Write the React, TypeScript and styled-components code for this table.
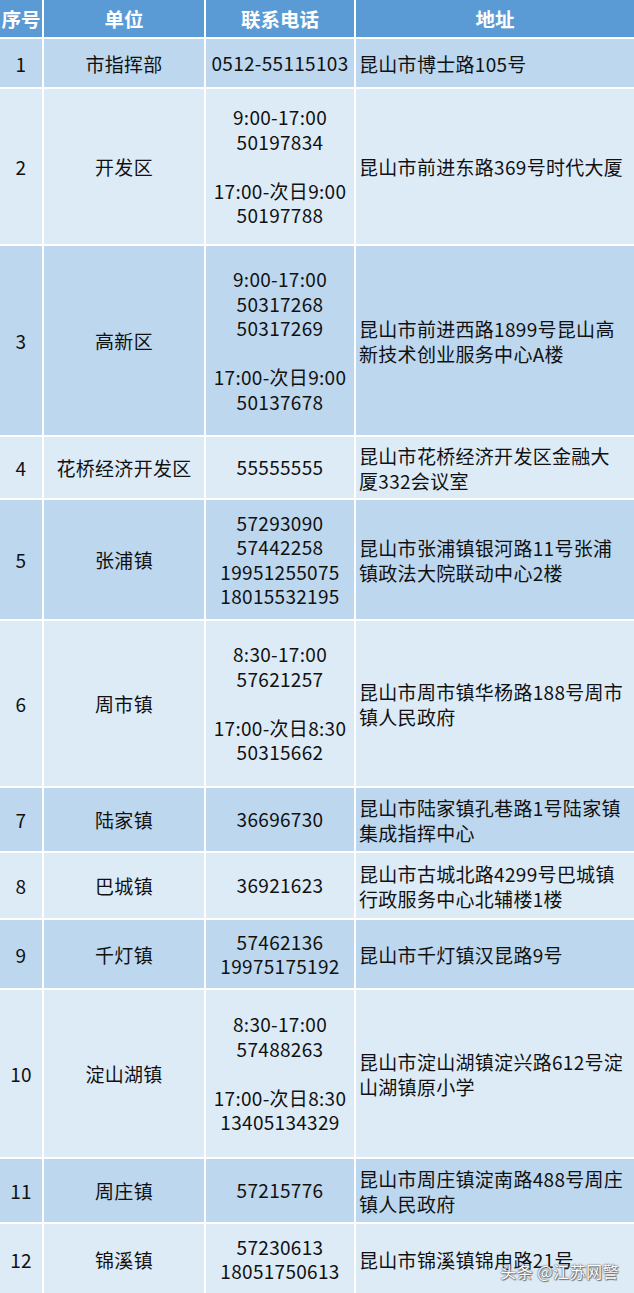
import * as React from 'react';
import styled, { createGlobalStyle } from 'styled-components';

const GlobalStyle = createGlobalStyle`
    html, body {
        margin: 0;
        padding: 0;
        background: #ffffff;
    }
    body {
        font-family: "Noto Sans CJK SC", "Liberation Sans", sans-serif;
        color: #111111;
    }
`;

const Page = styled.div`
    position: relative;
    width: 634px;
    height: 1293px;
    overflow: hidden;
    background: #ffffff;
`;

const Table = styled.div`
    display: flex;
    flex-direction: column;
    gap: 2px;
`;

const Row = styled.div<{ $height: number }>`
    display: grid;
    grid-template-columns: 42px 160px 148px 1fr;
    gap: 2px;
    height: ${p => p.$height}px;
`;

const HeadCell = styled.div`
    background: #5b9bd5;
    color: #ffffff;
    font-weight: 700;
    font-size: 19.5px;
    display: flex;
    align-items: center;
    justify-content: center;
    white-space: nowrap;
    overflow: hidden;
`;

const Cell = styled.div<{ $dark: boolean; $align?: 'left' | 'center' }>`
    background: ${p => (p.$dark ? '#bdd7ee' : '#ddebf7')};
    display: flex;
    flex-direction: column;
    justify-content: center;
    align-items: ${p => (p.$align === 'left' ? 'flex-start' : 'center')};
    padding: ${p => (p.$align === 'left' ? '0 0 0 3px' : '0')};
    font-size: 19px;
    letter-spacing: 0.3px;
    white-space: nowrap;
    overflow: hidden;
`;

const PhoneLine = styled.div`
    line-height: 24.5px;
    height: 24.5px;
`;

const AddrLine = styled.div`
    line-height: 25px;
`;

const Watermark = styled.div`
    position: absolute;
    right: 15px;
    bottom: 10px;
    font-size: 16px;
    color: #ffffff;
    letter-spacing: 0.5px;
    text-shadow: 0 0 1px #555, 0 0 2px #666, 1px 1px 1px #777;
`;

type Entry = {
    no: string;
    unit: string;
    phones: string[];
    address: string[];
    height: number;
};

const rows: Entry[] = [
    { no: '1', unit: '市指挥部', phones: ['0512-55115103'], address: ['昆山市博士路105号'], height: 48 },
    {
        no: '2', unit: '开发区',
        phones: ['9:00-17:00', '50197834', '', '17:00-次日9:00', '50197788'],
        address: ['昆山市前进东路369号时代大厦'], height: 155,
    },
    {
        no: '3', unit: '高新区',
        phones: ['9:00-17:00', '50317268', '50317269', '', '17:00-次日9:00', '50137678'],
        address: ['昆山市前进西路1899号昆山高', '新技术创业服务中心A楼'], height: 189,
    },
    { no: '4', unit: '花桥经济开发区', phones: ['55555555'], address: ['昆山市花桥经济开发区金融大', '厦332会议室'], height: 61 },
    {
        no: '5', unit: '张浦镇',
        phones: ['57293090', '57442258', '19951255075', '18015532195'],
        address: ['昆山市张浦镇银河路11号张浦', '镇政法大院联动中心2楼'], height: 119,
    },
    {
        no: '6', unit: '周市镇',
        phones: ['8:30-17:00', '57621257', '', '17:00-次日8:30', '50315662'],
        address: ['昆山市周市镇华杨路188号周市', '镇人民政府'], height: 165,
    },
    { no: '7', unit: '陆家镇', phones: ['36696730'], address: ['昆山市陆家镇孔巷路1号陆家镇', '集成指挥中心'], height: 63 },
    { no: '8', unit: '巴城镇', phones: ['36921623'], address: ['昆山市古城北路4299号巴城镇', '行政服务中心北辅楼1楼'], height: 65 },
    { no: '9', unit: '千灯镇', phones: ['57462136', '19975175192'], address: ['昆山市千灯镇汉昆路9号'], height: 68 },
    {
        no: '10', unit: '淀山湖镇',
        phones: ['8:30-17:00', '57488263', '', '17:00-次日8:30', '13405134329'],
        address: ['昆山市淀山湖镇淀兴路612号淀', '山湖镇原小学'], height: 167,
    },
    { no: '11', unit: '周庄镇', phones: ['57215776'], address: ['昆山市周庄镇淀南路488号周庄', '镇人民政府'], height: 63 },
    { no: '12', unit: '锦溪镇', phones: ['57230613', '18051750613'], address: ['昆山市锦溪镇锦甪路21号'], height: 70 },
];

export default function App() {
    return <Page>
        <GlobalStyle />
        <Table>
            <Row $height={37}>
                <HeadCell>序号</HeadCell>
                <HeadCell>单位</HeadCell>
                <HeadCell>联系电话</HeadCell>
                <HeadCell>地址</HeadCell>
            </Row>
            {rows.map((r, i) => {
                const dark = i % 2 === 0;
                return <Row key={r.no} $height={r.height}>
                    <Cell $dark={dark}>{r.no}</Cell>
                    <Cell $dark={dark}>{r.unit}</Cell>
                    <Cell $dark={dark}>
                        {r.phones.map((p, j) => <PhoneLine key={j}>{p}</PhoneLine>)}
                    </Cell>
                    <Cell $dark={dark} $align="left">
                        {r.address.map((a, j) => <AddrLine key={j}>{a}</AddrLine>)}
                    </Cell>
                </Row>;
            })}
        </Table>
        <Watermark>头条 @江苏网警</Watermark>
    </Page>;
}
